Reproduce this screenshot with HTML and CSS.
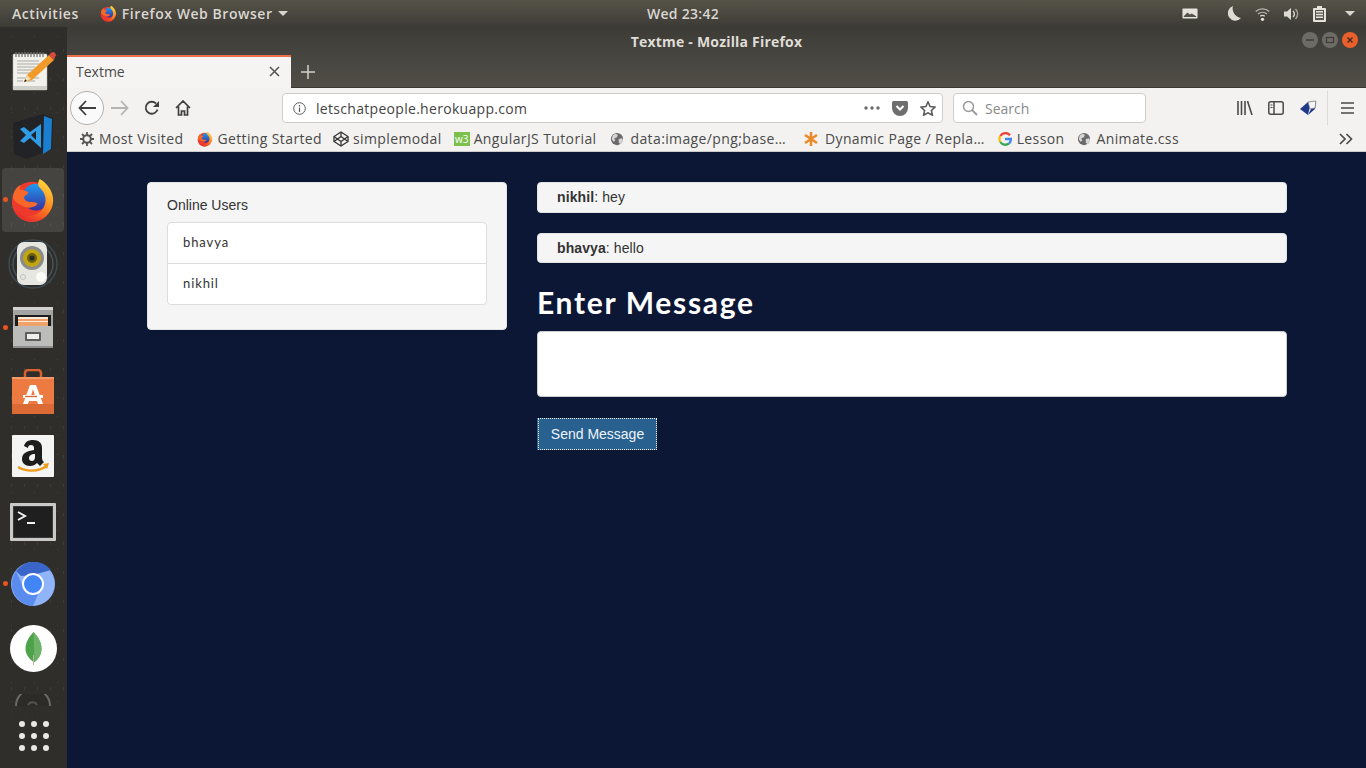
FILE: index.html
```html
<!DOCTYPE html>
<html lang="en">
<head>
  <meta charset="UTF-8">
  <title>Textme - Mozilla Firefox</title>
  <link rel="stylesheet" href="styles.css">
</head>
<body>
  <svg class="defs" width="0" height="0">
    <defs>
      <linearGradient id="foxOuter" x1="0.8" y1="0" x2="0.2" y2="1">
        <stop offset="0" stop-color="#ffdc3e"/>
        <stop offset="0.45" stop-color="#ff8a1f"/>
        <stop offset="1" stop-color="#e5202e"/>
      </linearGradient>
      <linearGradient id="foxBlue" x1="0.5" y1="0" x2="0.5" y2="1">
        <stop offset="0" stop-color="#1d9bf0"/>
        <stop offset="1" stop-color="#3a2f9e"/>
      </linearGradient>
      <symbol id="firefox" viewBox="0 0 48 48">
        <circle cx="23" cy="26" r="21" fill="#ee3a2c"/>
        <circle cx="27" cy="21" r="14" fill="url(#foxBlue)"/>
        <path d="M31 2c7 4 14 12 14 22 0 12-9 22-22 22C13 46 5 40 3 31c4 8 13 11 21 9 9-2 14-10 13-18-1-7-5-9-7-12-1-2-1-5 1-8z" fill="url(#foxOuter)"/>
        <path d="M3 22c0-6 3-11 8-14l-1 5c3 0 6 1 9 3 0 2-2 3-4 4-1 3 1 5 5 6 4 0 7 0 9 2-3 4-9 5-14 3-6-2-11-6-12-9z" fill="#f7682a"/>
      </symbol>
      <symbol id="globe" viewBox="0 0 16 16">
        <circle cx="8" cy="8" r="7" fill="#6a6a6a"/>
        <path d="M3 4l3-2 3 1-1 3-3 1 1 3-2 1-2-3zM10 8l4-1 1 3-3 4-2-2z" fill="#d6d6d6"/>
      </symbol>
    </defs>
  </svg>

  <div class="top-bar">
    <span class="top-left">
      <span class="top-activities">Activities</span>
      <svg class="top-fox" width="17" height="17"><use href="#firefox"/></svg>
      <span>Firefox Web Browser</span>
      <span class="caret"></span>
    </span>
    <span class="top-clock">Wed 23:42</span>
    <span class="top-right">
      <svg width="16" height="11" viewBox="0 0 18 12"><rect x="0.5" y="0.5" width="17" height="11" rx="1" fill="#e6e3dd"/><path d="M2 9l4-4 3 2 2-1 5 3v1H2z" fill="#55524b"/></svg>
      <svg class="moon" width="13" height="15" viewBox="0 0 13 15"><path d="M5 0a7.500 7.500 0 1 0 8 12A9.500 9.500 0 0 1 5 0z" fill="#dedbd5"/></svg>
      <svg width="15" height="14" viewBox="0 0 15 14"><g fill="none" stroke="#b9b6b0" stroke-width="1.300"><path d="M0.700 4.500a10 10 0 0 1 13.600 0"/><path d="M3 7a7 7 0 0 1 9 0"/></g><path d="M5.200 9.200a4 4 0 0 1 4.600 0" fill="none" stroke="#dedbd5" stroke-width="1.300"/><circle cx="7.500" cy="12.300" r="1.600" fill="#e6e3dd"/></svg>
      <svg width="15" height="14" viewBox="0 0 15 14"><path d="M0 4.500h3L7 1v12L3 9.500H0z" fill="#dedbd5"/><path d="M9 4a4 4 0 0 1 0 6" fill="none" stroke="#dedbd5" stroke-width="1.400"/><path d="M11.500 2a7 7 0 0 1 0 10" fill="none" stroke="#a8a59f" stroke-width="1.400"/></svg>
      <svg width="13" height="16" viewBox="0 0 13 16"><path d="M4 0h5v2h3a1 1 0 0 1 1 1v12a1 1 0 0 1-1 1H1a1 1 0 0 1-1-1V3a1 1 0 0 1 1-1h3z" fill="#e6e3dd"/><path d="M2 4h9v10H2z" fill="#55524b"/><path d="M3 5h7v1.600H3zM3 7.700h7v1.600H3zM3 10.400h7v1.600H3z" fill="#e6e3dd"/></svg>
      <span class="caret"></span>
    </span>
  </div>

  <div class="desktop">
    <nav class="dock">
      <div class="dock-item">
        <svg width="48" height="48" viewBox="0 0 48 48">
          <rect x="4" y="6" width="34" height="36" rx="1" fill="#f2f1ec" stroke="#b8b8b2" stroke-width="0.500"/>
          <path d="M4 38h34v4H4z" fill="#d0d0cb"/>
          <path d="M7 4v5M10 4v5M13 4v5M16 4v5M19 4v5M22 4v5M25 4v5M28 4v5M31 4v5M34 4v5" stroke="#6e6e6e" stroke-width="1.200"/>
          <path d="M8 13h22M8 16h26M8 19h18M8 22h24M8 25h14M8 30h10M22 30h8M8 33h6M18 33h8" stroke="#a9a9a4" stroke-width="1"/>
          <path d="M15 34l3-7 22-20 5 5-22 20z" fill="#f09a2a"/>
          <path d="M15 34l3-7 4 4z" fill="#f3dcb4"/>
          <path d="M15 34l1.200-2.800 1.700 1.700z" fill="#222"/>
          <path d="M40 7l2-2a2 2 0 0 1 4 4l-1 3z" fill="#d84a3c"/>
        </svg>
      </div>
      <div class="dock-item">
        <svg width="48" height="48" viewBox="0 0 48 48">
          <path d="M4 11l30-9 10 4-1 31-25 10-13-5z" fill="#222327"/>
          <path d="M35 4l8 3-1 30-8 5z" fill="#1b7fd1"/>
          <path d="M32 12v24L21 26l-6 5-4-2 6-6-6-6 4-2 6 5z" fill="#2f9ce8"/>
          <path d="M27 19l-5 4 5 5z" fill="#222327"/>
        </svg>
      </div>
      <div class="dock-item dock-active">
        <span class="dock-dot"></span>
        <svg width="46" height="46"><use href="#firefox"/></svg>
      </div>
      <div class="dock-item">
        <svg width="50" height="50" viewBox="0 0 50 50">
          <circle cx="25" cy="25" r="24" fill="none" stroke="#3c4a55" stroke-width="1.500"/>
          <circle cx="25" cy="25" r="20" fill="none" stroke="#46525a" stroke-width="1.500"/>
          <rect x="9" y="3" width="30" height="43" rx="7" fill="#e7e7e2"/>
          <circle cx="24" cy="19" r="12" fill="#8a8c8c"/>
          <circle cx="24" cy="19" r="9" fill="#c2a512"/>
          <circle cx="24" cy="19" r="5" fill="#6e610c"/>
          <circle cx="24" cy="19" r="2.500" fill="#2a2a22"/>
          <circle cx="33" cy="38" r="5" fill="#fafaf6"/>
          <circle cx="15" cy="38" r="2.500" fill="none" stroke="#c2c2bd"/>
        </svg>
      </div>
      <div class="dock-item">
        <span class="dock-dot"></span>
        <svg width="44" height="44" viewBox="0 0 44 44">
          <path d="M2 2h40v34H2z" fill="#a4a4a3"/>
          <path d="M2 1h40v3H2z" fill="#d2d2d0"/>
          <path d="M4 9h36v11H4z" fill="#1d1d1d"/>
          <path d="M7 11h30v9H7z" fill="#f0a26d"/>
          <path d="M7 11h30v2H7zM7 15h30v1H7z" fill="#fbe9d8"/>
          <path d="M2 20h40v22H2z" fill="#bcbcba"/>
          <path d="M2 40h40v2H2z" fill="#8e8e8c"/>
          <rect x="14" y="26" width="16" height="9" rx="1" fill="#5e5e5c"/>
          <rect x="16" y="28" width="12" height="5" fill="#eeeeec"/>
        </svg>
      </div>
      <div class="dock-item">
        <svg width="44" height="46" viewBox="0 0 44 46">
          <path d="M14 8V4a3 3 0 0 1 3-3h10a3 3 0 0 1 3 3v4" fill="none" stroke="#d9622c" stroke-width="2.500"/>
          <path d="M1 8l42 0v37H1z" fill="#ec7a41"/>
          <path d="M1 35h42v10H1z" fill="#dc6a34"/>
          <path d="M1 8h42v2H1z" fill="#f39a68"/>
          <path d="M19 16h6l7 19h-5l-1-3h-8l-1 3h-5zM22 20l-2 7h4z" fill="#fff"/>
          <path d="M12 26h20v3H12z" fill="#fff"/>
          <path d="M14 26.800h12v1.400H14z" fill="#dc6a34"/>
        </svg>
      </div>
      <div class="dock-item">
        <svg width="42" height="42" viewBox="0 0 42 42">
          <rect width="42" height="42" rx="1" fill="#f4f4f2"/>
          <path d="M6 32c8 5 20 5 29-1" fill="none" stroke="#f09a1d" stroke-width="2.200"/>
          <path d="M31 29l6-1-2 6z" fill="#f09a1d"/>
          <path d="M12 11c1-4 4-6 9-6 6 0 9 3 9 8v10c0 2 1 3 2 4l-4 4c-1-1-2-2-3-3-2 2-4 3-7 3-5 0-8-3-8-7 0-6 5-8 12-9v-2c0-2-1-3-3-3s-3 1-3 3zm11 8c-4 0-6 2-6 4 0 2 1 3 3 3 2 0 3-2 3-4z" fill="#1d1d1d"/>
        </svg>
      </div>
      <div class="dock-item dock-low">
        <svg width="46" height="38" viewBox="0 0 46 38">
          <rect width="46" height="38" rx="1" fill="#c9c9c7"/>
          <rect x="3" y="3" width="40" height="32" fill="#3a3a3a"/>
          <rect x="4" y="4" width="38" height="30" fill="#1f1f1f"/>
          <path d="M8 9l7 4-7 4" fill="none" stroke="#f2f2f2" stroke-width="2"/>
          <path d="M17 19h8v2h-8z" fill="#f2f2f2"/>
        </svg>
      </div>
      <div class="dock-item">
        <span class="dock-dot"></span>
        <svg width="44" height="44" viewBox="0 0 44 44">
          <circle cx="22" cy="22" r="22" fill="#8fb4f7"/>
          <path d="M5 9a22 22 0 0 1 35-1l-18 5-12 1z" fill="#3a66c9"/>
          <path d="M5 9a22 22 0 0 0 17 35l6-14-15-3z" fill="#5a8cf0"/>
          <circle cx="22" cy="22" r="10" fill="#4285f4" stroke="#fff" stroke-width="2"/>
        </svg>
      </div>
      <div class="dock-item">
        <svg width="47" height="47" viewBox="0 0 47 47">
          <circle cx="23.500" cy="23.500" r="23.500" fill="#fff"/>
          <path d="M23.500 7c5 5 8 11 8 17 0 6-4 11-7 13h-1c-3-2-8-7-8-13 0-6 3-12 8-17z" fill="#4ea24b"/>
          <path d="M23.500 7c5 5 8 11 8 17 0 6-4 11-7 13z" fill="#6db368"/>
          <path d="M23 30h1v10h-1z" fill="#b9b4a0"/>
        </svg>
      </div>
      <div class="dock-item">
        <svg width="36" height="36" viewBox="0 0 36 36">
          <path d="M1 12a17 17 0 0 1 34 0" fill="#2c2b27" stroke="#6b6964" stroke-width="2"/>
          <path d="M13 11a5 5 0 0 1 9 0" fill="none" stroke="#55534e" stroke-width="2"/>
        </svg>
      </div>
      <div class="show-apps">
        <svg width="32" height="32" viewBox="0 0 32 32" fill="#e8e8e6">
          <circle cx="4" cy="4" r="3"/><circle cx="16" cy="4" r="3"/><circle cx="28" cy="4" r="3"/>
          <circle cx="4" cy="16" r="3"/><circle cx="16" cy="16" r="3"/><circle cx="28" cy="16" r="3"/>
          <circle cx="4" cy="28" r="3"/><circle cx="16" cy="28" r="3"/><circle cx="28" cy="28" r="3"/>
        </svg>
      </div>
    </nav>

    <div class="window">
      <div class="title-bar">
        <span>Textme - Mozilla Firefox</span>
        <span class="win-buttons">
          <span class="win-btn"><svg width="10" height="10" viewBox="0 0 10 10"><path d="M1 5h8" stroke="#3c3b37" stroke-width="1.500"/></svg></span>
          <span class="win-btn"><svg width="10" height="10" viewBox="0 0 10 10"><rect x="1.500" y="2.500" width="7" height="5" fill="none" stroke="#3c3b37" stroke-width="1.200"/></svg></span>
          <span class="win-btn win-close"><svg width="10" height="10" viewBox="0 0 10 10"><path d="M2.500 2.500l5 5M7.500 2.500l-5 5" stroke="#3c2a20" stroke-width="1.400"/></svg></span>
        </span>
      </div>

      <div class="tab-bar">
        <div class="tab">
          <span>Textme</span>
          <svg width="11" height="11" viewBox="0 0 11 11"><path d="M1 1l9 9M10 1l-9 9" stroke="#55534f" stroke-width="1.500"/></svg>
        </div>
        <svg class="new-tab" width="14" height="14" viewBox="0 0 14 14"><path d="M7 0v14M0 7h14" stroke="#d2d0ca" stroke-width="1.500"/></svg>
      </div>

      <div class="nav-bar">
        <span class="back-btn">
          <svg width="18" height="16" viewBox="0 0 18 16"><path d="M8 1L1.500 8 8 15M2 8h16" fill="none" stroke="#3f3f3f" stroke-width="1.800"/></svg>
        </span>
        <svg class="nav-forward" width="18" height="16" viewBox="0 0 18 16"><path d="M10 1l6.500 7L10 15M16 8H0" fill="none" stroke="#b4b4b4" stroke-width="1.800"/></svg>
        <svg class="nav-reload" width="16" height="16" viewBox="0 0 16 16"><path d="M13.500 9.500A6 6 0 1 1 12 3.500" fill="none" stroke="#3f3f3f" stroke-width="1.800"/><path d="M15 1v6H9z" fill="#3f3f3f"/></svg>
        <svg class="nav-home" width="16" height="16" viewBox="0 0 16 16"><path d="M1 8l7-7 7 7M3.500 6.500V15h3v-4h3v4h3V6.500" fill="none" stroke="#3f3f3f" stroke-width="1.700"/></svg>

        <div class="url-box">
          <svg width="13" height="13" viewBox="0 0 13 13"><circle cx="6.500" cy="6.500" r="5.800" fill="none" stroke="#5c5c5c"/><path d="M6.500 5.500v4.500M6.500 3v1.400" stroke="#5c5c5c" stroke-width="1.200"/></svg>
          <span class="url-text">letschatpeople.herokuapp.com</span>
          <svg width="16" height="4" viewBox="0 0 16 4" fill="#6a6a6a"><circle cx="2" cy="2" r="1.700"/><circle cx="8" cy="2" r="1.700"/><circle cx="14" cy="2" r="1.700"/></svg>
          <svg width="16" height="15" viewBox="0 0 16 15"><path d="M1.500 0h13A1.500 1.500 0 0 1 16 1.500V7a8 8 0 0 1-16 0V1.500A1.500 1.500 0 0 1 1.500 0z" fill="#6e6e6e"/><path d="M4.500 5l3.500 3.500L11.500 5" fill="none" stroke="#fff" stroke-width="2"/></svg>
          <svg width="16" height="15" viewBox="0 0 16 15"><path d="M8 1l2.100 4.500 4.900.6-3.600 3.300 1 4.800L8 11.800l-4.400 2.400 1-4.800L1 6.100l4.900-.6z" fill="none" stroke="#555" stroke-width="1.500"/></svg>
        </div>

        <div class="search-box">
          <svg width="16" height="16" viewBox="0 0 16 16"><circle cx="6.500" cy="6.500" r="5" fill="none" stroke="#9a9a9a" stroke-width="1.500"/><path d="M10 10l5 5" stroke="#9a9a9a" stroke-width="1.800"/></svg>
          <span>Search</span>
        </div>

        <div class="nav-tools">
          <svg width="16" height="14" viewBox="0 0 16 14"><path d="M1 0v14M4.500 0v14M8 0v14M10.500 0l4.500 14" fill="none" stroke="#4a4a4a" stroke-width="1.600"/></svg>
          <svg class="tool-sidebar" width="16" height="14" viewBox="0 0 16 14"><rect x="0.800" y="0.800" width="14.400" height="12.400" rx="2" fill="none" stroke="#4a4a4a" stroke-width="1.500"/><path d="M6 1v12" stroke="#4a4a4a" stroke-width="1.500"/><path d="M2.500 4H4.500M2.500 6.500H4.500" stroke="#4a4a4a"/></svg>
          <svg class="tool-tag" width="17" height="16" viewBox="0 0 17 16"><path d="M0 9l8-7 3 0-3 13z" fill="#1f3a8a"/><path d="M8 2h8l-1 7-7 6 3-6z" fill="#1f3a8a"/><path d="M8 2l8-1-1 7-5 1z" fill="#f5f5f5" stroke="#7d7d7d" stroke-width="0.800"/></svg>
          <span class="tool-sep"></span>
          <svg width="13" height="12" viewBox="0 0 13 12"><path d="M0 1h13M0 6h13M0 11h13" stroke="#4a4a4a" stroke-width="1.700"/></svg>
        </div>
      </div>

      <div class="bookmarks">
        <span class="bm bm-first">
          <svg width="14" height="14" viewBox="0 0 14 14"><circle cx="7" cy="7" r="3.800" fill="none" stroke="#555" stroke-width="2"/><path d="M7 0v3M7 11v3M0 7h3M11 7h3M2 2l2 2M10 10l2 2M12 2l-2 2M4 10l-2 2" stroke="#555" stroke-width="1.800"/></svg>
          Most Visited
        </span>
        <span class="bm bm-tight bm-started"><svg width="16" height="16"><use href="#firefox"/></svg>Getting Started</span>
        <span class="bm bm-tight">
          <svg width="16" height="16" viewBox="0 0 16 16"><g fill="none" stroke="#333" stroke-width="1.300"><path d="M8 1l7 4.500v5L8 15l-7-4.500v-5z"/><path d="M8 1v4.500M8 10.500V15M1 5.500l7 5 7-5M1 10.500l7-5 7 5"/></g></svg>
          simplemodal
        </span>
        <span class="bm bm-tight bm-angular">
          <span class="bm-w3">w3</span>
          AngularJS Tutorial
        </span>
        <span class="bm bm-data"><svg width="14" height="14"><use href="#globe"/></svg>data:image/png;base…</span>
        <span class="bm bm-dynamic">
          <svg width="16" height="16" viewBox="0 0 16 16"><path d="M8 1v14M2 4l12 8M14 4L2 12" stroke="#ea8a2a" stroke-width="2.600"/></svg>
          Dynamic Page / Repla…
        </span>
        <span class="bm bm-lesson">
          <svg width="14" height="14" viewBox="0 0 14 14" fill="none" stroke-width="2.300"><path d="M12 3.200A6 6 0 0 0 2.300 4" stroke="#ea4335"/><path d="M2.300 4a6 6 0 0 0 0 6" stroke="#fbbc05"/><path d="M2.300 10a6 6 0 0 0 8.700 1.500" stroke="#34a853"/><path d="M11 11.500A6 6 0 0 0 13 7H7" stroke="#4285f4"/></svg>
          Lesson
        </span>
        <span class="bm"><svg width="14" height="14"><use href="#globe"/></svg>Animate.css</span>
        <svg class="bm-more" width="14" height="12" viewBox="0 0 14 12"><path d="M1 1l5 5-5 5M7.500 1l5 5-5 5" fill="none" stroke="#4a4a4a" stroke-width="1.700"/></svg>
      </div>

      <main class="page">
        <section class="users-panel">
          <p class="users-title">Online Users</p>
          <ul class="users-list">
            <li>bhavya</li>
            <li>nikhil</li>
          </ul>
        </section>
        <section class="chat">
          <div class="msg msg-first"><strong>nikhil</strong>: hey</div>
          <div class="msg"><strong>bhavya</strong>: hello</div>
          <h2 class="msg-heading">Enter Message</h2>
          <div class="msg-input"></div>
          <button class="send-btn"><span>Send Message</span></button>
        </section>
      </main>
    </div>
  </div>
</body>
</html>
```

FILE: styles.css
```css
* {
  box-sizing: border-box;
}
html, body {
  height: 100%;
}
body {
  margin: 0;
  overflow: hidden;
  display: flex;
  flex-direction: column;
  font-family: "Open Sans", "Noto Sans", sans-serif;
  background-color: #0c1635;
}
.defs {
  position: absolute;
}
svg {
  display: block;
  flex: none;
}

/* top bar */
.top-bar {
  height: 27px;
  flex: none;
  display: grid;
  grid-template-columns: 1fr auto 1fr;
  align-items: center;
  background: linear-gradient(#565349, #3d3b36);
  color: #d9d6d0;
  font-size: 14px;
  font-weight: 600;
  letter-spacing: 0.55px;
}
.top-left {
  display: flex;
  align-items: center;
  padding-left: 12px;
}
.top-activities {
  margin-right: 21px;
}
.top-fox {
  margin-right: 5px;
}
.caret {
  width: 0;
  height: 0;
  border-left: 5px solid transparent;
  border-right: 5px solid transparent;
  border-top: 5px solid #d9d6d0;
  margin-left: 5px;
}
.top-clock {
  letter-spacing: 0.3px;
}
.top-right {
  display: flex;
  align-items: center;
  justify-content: flex-end;
  gap: 14px;
  padding-right: 11px;
}
.top-right .moon {
  margin-left: 16px;
}

/* dock */
.desktop {
  flex: 1;
  min-height: 0;
  display: flex;
}
.dock {
  width: 67px;
  flex: none;
  position: relative;
  overflow: hidden;
  padding-top: 13px;
  background-color: #302e2a;
  background-image:
    radial-gradient(#45433e 0.5px, transparent 0.8px),
    radial-gradient(#3e3c37 0.5px, transparent 0.8px);
  background-size: 23px 19px, 13px 29px;
  background-position: 0 0, 5px 9px;
}
.dock-item {
  position: relative;
  height: 64px;
  margin: 0 3px 0 2px;
  display: flex;
  align-items: center;
  justify-content: center;
}
.dock-low {
  padding-top: 3px;
}
.dock-active {
  border-radius: 4px;
  background-color: rgba(255, 255, 255, 0.11);
}
.dock-dot {
  position: absolute;
  left: 1px;
  top: 29px;
  width: 5px;
  height: 5px;
  border-radius: 50%;
  background-color: #e95420;
}
.show-apps {
  position: absolute;
  left: 0;
  right: 0;
  bottom: 0;
  height: 60px;
  padding-top: 12px;
  display: flex;
  justify-content: center;
  background: linear-gradient(rgba(48, 46, 42, 0), #302e2a 24%);
}

/* firefox window */
.window {
  flex: 1;
  min-width: 0;
  display: flex;
  flex-direction: column;
}
.title-bar {
  height: 28px;
  flex: none;
  position: relative;
  display: flex;
  align-items: center;
  justify-content: center;
  background: linear-gradient(#3d3b36, #474540);
  color: #dfdcd6;
  font-size: 14px;
  font-weight: 700;
  letter-spacing: 0.2px;
}
.win-buttons {
  position: absolute;
  top: 5px;
  right: 8px;
  display: flex;
  gap: 4px;
}
.win-btn {
  width: 16px;
  height: 16px;
  border-radius: 50%;
  display: flex;
  align-items: center;
  justify-content: center;
  background-color: #6d6b65;
}
.win-close {
  background-color: #e9602c;
}
.tab-bar {
  height: 33px;
  flex: none;
  display: flex;
  align-items: center;
  background: linear-gradient(#474540, #514e47);
  box-shadow: inset 0 -1px 0 #3a3833;
}
.tab {
  width: 224px;
  height: 33px;
  display: flex;
  align-items: center;
  justify-content: space-between;
  padding: 0 11px 2px 9px;
  background-color: #f5f4f2;
  border-top: 2px solid #e9704a;
  color: #4a4a4a;
  font-size: 14px;
}
.new-tab {
  margin-left: 10px;
}
.nav-bar {
  height: 38px;
  flex: none;
  display: flex;
  align-items: center;
  padding: 2px 0 0 3px;
  background-color: #f3f2f0;
}
.back-btn {
  width: 34px;
  height: 34px;
  border: 1px solid #b1b1b1;
  border-radius: 50%;
  background-color: #fafafa;
  display: flex;
  align-items: center;
  justify-content: center;
}
.nav-forward {
  margin-left: 7px;
}
.nav-reload {
  margin-left: 15px;
}
.nav-home {
  margin-left: 15px;
}
.url-box {
  width: 661px;
  height: 30px;
  margin-left: 91px;
  display: flex;
  align-items: center;
  gap: 12px;
  padding: 0 6px 0 10px;
  background-color: #fff;
  border: 1px solid #cfcdc9;
  border-radius: 4px;
}
.url-text {
  flex: 1;
  margin-left: -2px;
  color: #444;
  font-size: 14px;
  letter-spacing: 0.3px;
}
.search-box {
  width: 193px;
  height: 30px;
  margin-left: 10px;
  display: flex;
  align-items: center;
  gap: 7px;
  padding-left: 8px;
  background-color: #fff;
  border: 1px solid #cfcdc9;
  border-radius: 4px;
  color: #8a8a8a;
  font-size: 14px;
}
.nav-tools {
  flex: 1;
  height: 34px;
  display: flex;
  align-items: center;
  padding-left: 91px;
}
.tool-sidebar {
  margin-left: 15px;
}
.tool-tag {
  margin-left: 16px;
}
.tool-sep {
  width: 1px;
  height: 34px;
  margin: 0 13px 0 10px;
  background-color: #dcdad7;
}
.bookmarks {
  height: 26px;
  flex: none;
  display: flex;
  align-items: center;
  padding-left: 13px;
  background-color: #f3f2f0;
  border-bottom: 1px solid #cfcdca;
  color: #4a4a4a;
  font-size: 14px;
  letter-spacing: 0.38px;
}
.bm {
  display: flex;
  align-items: center;
  gap: 5px;
  margin-right: 12px;
  white-space: nowrap;
}
.bm-first {
  margin-right: 14px;
}
.bm-tight {
  gap: 4px;
}
.bm-started {
  margin-right: 11px;
}
.bm-angular {
  margin-right: 13px;
}
.bm-data {
  gap: 7px;
  margin-right: 17px;
}
.bm-dynamic {
  gap: 6px;
  margin-right: 13px;
}
.bm-lesson {
  margin-right: 13px;
}
.bm-w3 {
  width: 16px;
  height: 14px;
  background-color: #7cc04b;
  color: #fff;
  font-size: 10px;
  line-height: 14px;
  text-align: center;
  letter-spacing: 0;
}
.bm-more {
  margin-left: auto;
  margin-right: 13px;
}

/* the chat page */
.page {
  flex: 1;
  min-height: 0;
  display: flex;
  align-items: flex-start;
  gap: 30px;
  padding: 30px 0 0 80px;
  background-color: #0c1635;
  font-family: "Liberation Sans", Arial, sans-serif;
  font-size: 14px;
  color: #333;
}
.users-panel {
  width: 360px;
  height: 148px;
  padding: 14px 19px 0;
  background-color: #f5f5f5;
  border: 1px solid #e3e3e3;
  border-radius: 4px;
}
.users-title {
  margin: 0 0 8px;
  line-height: 17px;
}
.users-list {
  margin: 0;
  padding: 0;
  list-style: none;
  background-color: #fff;
  border: 1px solid #ddd;
  border-radius: 4px;
  font-family: "Lato", sans-serif;
  font-size: 13px;
  letter-spacing: 0.9px;
}
.users-list li {
  height: 40px;
  padding: 10px 15px 0;
  line-height: 18px;
}
.users-list li + li {
  height: 41px;
  border-top: 1px solid #ddd;
}
.chat {
  width: 750px;
}
.msg {
  height: 30px;
  padding-left: 19px;
  margin-bottom: 0;
  background-color: #f5f5f5;
  border: 1px solid #e3e3e3;
  border-radius: 4px;
  line-height: 29px;
  letter-spacing: 0.1px;
}
.msg-first {
  height: 31px;
  margin-bottom: 20px;
}
.msg-heading {
  margin: 21px 0 11px;
  color: #fff;
  font-family: "Lato", sans-serif;
  font-size: 30px;
  font-weight: 700;
  line-height: 36px;
  letter-spacing: 1.7px;
}
.msg-input {
  height: 66px;
  background-color: #fff;
  border: 1px solid #ccc;
  border-radius: 4px;
}
.send-btn {
  display: block;
  width: 120px;
  height: 32px;
  margin-top: 21px;
  padding: 0 0 0 1px;
  background-color: #286090;
  border: none;
  color: #eef4fa;
  font-family: inherit;
  font-size: 14px;
}
.send-btn span {
  display: block;
  height: 32px;
  line-height: 31px;
  border: 1px dotted #f2f2f2;
}
```
